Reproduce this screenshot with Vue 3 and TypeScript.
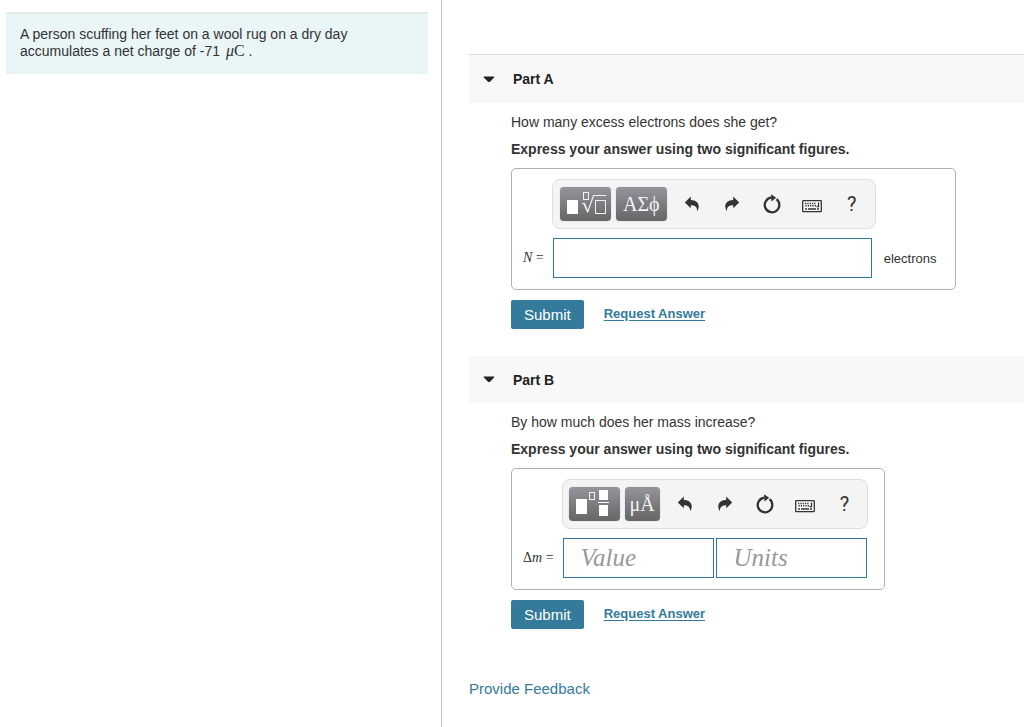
<script setup lang="ts">
import { reactive } from 'vue'

interface Field {
  id: string
  label: string
  placeholder: string
}

interface Part {
  id: string
  title: string
  question: string
  kind: 'number' | 'quantity'
  symbolsLabel: string
  unit: string
  open: boolean
  fields: Field[]
}

const instruction = 'Express your answer using two significant figures.'

const parts = reactive<Part[]>([
  {
    id: 'a',
    title: 'Part A',
    question: 'How many excess electrons does she get?',
    kind: 'number',
    symbolsLabel: 'ΑΣϕ',
    unit: 'electrons',
    open: true,
    fields: [{ id: 'a-answer', label: 'N in electrons', placeholder: '' }],
  },
  {
    id: 'b',
    title: 'Part B',
    question: 'By how much does her mass increase?',
    kind: 'quantity',
    symbolsLabel: 'μÅ',
    unit: '',
    open: true,
    fields: [
      { id: 'b-value', label: 'Value', placeholder: 'Value' },
      { id: 'b-units', label: 'Units', placeholder: 'Units' },
    ],
  },
])

const answers = reactive<Record<string, string>>({ 'a-answer': '', 'b-value': '', 'b-units': '' })

function reset(part: Part) {
  for (const field of part.fields) answers[field.id] = ''
}
</script>

<template>
  <div class="page">
    <aside class="side">
      <div class="problem">
        A person scuffing her feet on a wool rug on a dry day<br />
        accumulates a net charge of -71 <span class="math"><i>μ</i>C</span> .
      </div>
    </aside>

    <main class="main">
      <section v-for="part in parts" :key="part.id" class="part">
        <h2 class="part-head">
          <button type="button" class="toggle" :aria-expanded="part.open" @click="part.open = !part.open">
            <svg class="caret" viewBox="0 0 12 7" aria-hidden="true">
              <path d="M1.200 .5h9.600q1 .2.3 1L7 5.800q-1 .9-2 0L.9 1.500q-.7-.8.3-1z" fill="#222" />
            </svg>
            <span>{{ part.title }}</span>
          </button>
        </h2>

        <div v-if="part.open" class="part-body">
          <p class="line">{{ part.question }}</p>
          <p class="line strong">{{ instruction }}</p>

          <div class="answer" :class="part.kind">
            <div class="toolbar" role="toolbar" aria-label="Equation tools">
              <button type="button" class="key wide" aria-label="Templates">
                <svg v-if="part.kind === 'number'" viewBox="0 0 51 34" aria-hidden="true">
                  <rect x="7" y="13" width="11" height="14" fill="#fff" />
                  <g fill="none" stroke="#f2f2f2">
                    <rect x="23.500" y="5.500" width="5" height="7" />
                    <rect x="35.500" y="13.500" width="10" height="13" />
                    <path d="M22 17l2-1" />
                    <path d="M24 16l3.500 8.500" stroke-width="1.800" />
                    <path d="M27.500 25.500L33.500 8.500h12.500" stroke-width="1.200" />
                  </g>
                </svg>
                <svg v-else viewBox="0 0 51 34" aria-hidden="true">
                  <rect x="7" y="12" width="11" height="15" fill="#fff" />
                  <rect x="20.500" y="5.500" width="5" height="7" fill="none" stroke="#f2f2f2" />
                  <rect x="30" y="3" width="9" height="10" fill="#fff" />
                  <rect x="29" y="15" width="11" height="1" fill="#fff" />
                  <rect x="30" y="18" width="9" height="11" fill="#fff" />
                </svg>
              </button>
              <button type="button" class="key" :class="{ wide: part.kind === 'number' }">{{ part.symbolsLabel }}</button>
              <button type="button" class="tool" aria-label="Undo">
                <svg viewBox="0 0 16 16" aria-hidden="true">
                  <path d="M.8 6.400L6.800 .6v3.400C12 4 15 7 14.700 11c-.1 1.500-.7 2.900-1.700 4.200.4-4-1.700-6-6.200-6v3z" fill="#333" />
                </svg>
              </button>
              <button type="button" class="tool" aria-label="Redo">
                <svg viewBox="0 0 16 16" aria-hidden="true">
                  <path d="M15.200 6.400L9.200 .6v3.400C4 4 1 7 1.300 11c.1 1.500.7 2.900 1.700 4.200C2.600 11.200 4.700 9.200 9.200 9.200v3z" fill="#333" />
                </svg>
              </button>
              <button type="button" class="tool" aria-label="Reset" @click="reset(part)">
                <svg class="round" viewBox="0 0 20 20" aria-hidden="true">
                  <path d="M14.500 5.200A7.300 7.300 0 1 1 9.500 3.700" fill="none" stroke="#333" stroke-width="2.300" />
                  <path d="M9 .2l5.200 3.600-4.700 3.800z" fill="#333" />
                </svg>
              </button>
              <button type="button" class="tool" aria-label="Keyboard shortcuts">
                <svg class="round" viewBox="0 0 20 20" aria-hidden="true">
                  <rect x=".7" y="6.700" width="18.600" height="11" rx=".6" fill="#fafafa" stroke="#333" stroke-width="1.300" />
                  <path d="M3 9.500h11M3.500 11.800h11" stroke="#333" stroke-width="1.400" stroke-dasharray="1.300 1" />
                  <path d="M16.500 8.500v4.200h-2" fill="none" stroke="#333" stroke-width="1.300" />
                  <path d="M3 15h2M6 15h8M15 15h2" stroke="#333" stroke-width="1.400" />
                </svg>
              </button>
              <button type="button" class="tool help" aria-label="Help">?</button>
            </div>

            <label class="symbol" :for="part.fields[0].id">
              <template v-if="part.kind === 'number'"><i>N</i> =</template>
              <template v-else>Δ<i>m</i> =</template>
            </label>
            <div class="fields">
              <input
                v-for="field in part.fields"
                :id="field.id"
                :key="field.id"
                v-model="answers[field.id]"
                type="text"
                class="field"
                :placeholder="field.placeholder"
                :aria-label="field.label"
              />
            </div>
            <span v-if="part.unit" class="unit">{{ part.unit }}</span>
          </div>

          <div class="actions">
            <button type="button" class="submit">Submit</button>
            <a class="request" href="#request">Request Answer</a>
          </div>
        </div>
      </section>

      <a class="feedback" href="#feedback">Provide Feedback</a>
    </main>
  </div>
</template>

<style>
body {
  margin: 0;
  background: #fff;
}
</style>

<style scoped>
.page {
  display: grid;
  grid-template-columns: 442fr 582fr;
  min-height: 100vh;
  font-family: "Liberation Sans", Arial, sans-serif;
  font-size: 14px;
  color: #333;
}

.page *,
.page *::before {
  box-sizing: border-box;
}

button,
input {
  font-family: inherit;
  margin: 0;
}

button {
  cursor: pointer;
}

.side {
  padding: 12px 13px 12px 6px;
  border-right: 1px solid #c3cad5;
}

.problem {
  padding: 12px 14px 14px;
  border-top: 2px solid #e4e8e8;
  background: #e9f5f7;
  line-height: 17px;
}

.math {
  margin-left: 2px;
  font-family: "Liberation Serif", serif;
  font-size: 16px;
  line-height: 0;
}

.main {
  padding: 54px 0 24px 27px;
  min-width: 0;
}

.part {
  margin-bottom: 27px;
}

.part-head {
  margin: 0;
  background: #f8f8f8;
}

.part:first-child .part-head {
  border-top: 1px solid #dcdcdc;
}

.toggle {
  display: flex;
  align-items: center;
  gap: 18px;
  width: 100%;
  height: 47px;
  padding: 0 14px;
  border: 0;
  background: none;
  color: #222;
  font-size: 14px;
  font-weight: 700;
}

.part:first-child .toggle {
  height: 48px;
}

.caret {
  width: 12px;
  height: 7px;
}

.part-body {
  padding: 9px 16px 0 42px;
}

.line {
  margin: 0 0 7px;
  line-height: 20px;
}

.strong {
  font-weight: 700;
}

.answer {
  display: grid;
  grid-template-columns: auto auto auto;
  align-items: center;
  gap: 9px 8px;
  width: fit-content;
  margin-top: 9px;
  padding: 10px 18px 11px 11px;
  border: 1px solid #b0b0b0;
  border-radius: 5px;
}

.quantity {
  grid-template-columns: auto auto;
  padding-right: 16px;
}

.toolbar {
  grid-column: 2;
  display: flex;
  align-items: center;
  width: fit-content;
  height: 50px;
  padding: 0 3px 0 7px;
  border: 1px solid #dedede;
  border-radius: 8px;
  background: #f4f4f4;
}

.quantity .toolbar {
  padding: 0 2px 0 6px;
}

.key {
  width: 35px;
  height: 34px;
  margin-right: 5px;
  padding: 0;
  border: 0;
  border-radius: 4px;
  background: linear-gradient(#94949c, #666);
  box-shadow: 0 0 1px #999;
  color: #f4f4f4;
  font-family: "Liberation Serif", serif;
  font-size: 20px;
  line-height: 34px;
}

.key.wide {
  width: 51px;
  line-height: 32px;
}

.key svg {
  display: block;
  width: 51px;
  height: 34px;
}

.tool {
  display: flex;
  align-items: center;
  justify-content: center;
  width: 40px;
  height: 40px;
  padding: 0;
  border: 0;
  background: none;
  color: #333;
}

.tool svg {
  width: 16px;
  height: 16px;
}

.tool .round {
  width: 20px;
  height: 20px;
}

.help {
  font-family: Roboto, sans-serif;
  font-size: 20px;
}

.symbol {
  grid-column: 1;
  font-family: "Liberation Serif", serif;
  white-space: nowrap;
}

.fields {
  display: flex;
  gap: 2px;
  padding: 0 4px 0 1px;
}

.quantity .fields {
  padding: 0 1px;
}

.field {
  flex: 1;
  width: 0;
  height: 40px;
  padding: 0 17px;
  border: 1px solid #30799b;
  border-radius: 0;
  background: #fff;
  color: #333;
  font-family: "Liberation Serif", serif;
  font-size: 25px;
}

.field::placeholder {
  color: #999;
  font-style: italic;
  opacity: 1;
}

.unit {
  font-size: 13px;
}

.actions {
  display: flex;
  align-items: center;
  gap: 20px;
  margin-top: 10px;
}

.submit {
  height: 29px;
  padding: 0 13px;
  border: 0;
  border-radius: 2px;
  background: #337a9b;
  color: #fff;
  font-size: 15px;
}

.request {
  padding-bottom: 2px;
  color: #337a9b;
  font-size: 13px;
  font-weight: 700;
  text-underline-offset: 2px;
}

.feedback {
  display: inline-block;
  margin-top: 24px;
  color: #337a9b;
  font-size: 15px;
  line-height: 18px;
  text-decoration: none;
}
</style>
